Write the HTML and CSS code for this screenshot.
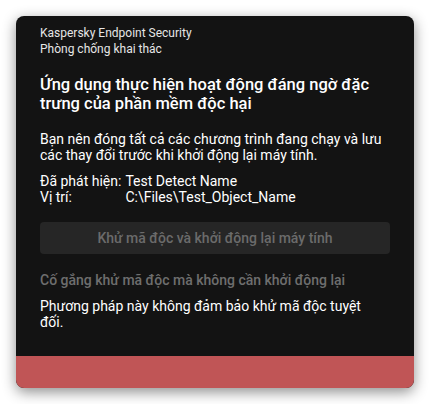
FILE: index.html
```html
<!DOCTYPE html>
<html lang="vi">

<head>
    <meta charset="UTF-8">
    <meta name="viewport" content="width=device-width, initial-scale=1.0">
    <title>Kaspersky Endpoint Security</title>
    <link rel="stylesheet" href="styles.css">
</head>

<body>
    <div class="dialog">
        <div class="content">
            <div class="app">
                <p>Kaspersky Endpoint Security</p>
                <p>Phòng chống khai thác</p>
            </div>

            <h2 class="title">Ứng dụng thực hiện hoạt động đáng ngờ đặc trưng của phần mềm độc hại</h2>

            <p class="message">Bạn nên đóng tất cả các chương trình đang chạy và lưu các thay đổi trước khi khởi động lại máy tính.</p>

            <div class="details">
                <span>Đã phát hiện:</span>
                <span>Test Detect Name</span>
                <span>Vị trí:</span>
                <span>C:\Files\Test_Object_Name</span>
            </div>

            <button type="button" class="action" disabled>Khử mã độc và khởi động lại máy tính</button>

            <a href="#" class="link">Cố gắng khử mã độc mà không cần khởi động lại</a>
            <p class="note">Phương pháp này không đảm bảo khử mã độc tuyệt đối.</p>
        </div>
        <div class="footer"></div>
    </div>
</body>

</html>
```

FILE: styles.css
```css
* {
    padding: 0;
    margin: 0;
    box-sizing: border-box;
    font-family: Roboto, "Noto Sans", sans-serif;
}

body {
    background-color: #ffffff;
    padding: 16px;
}

.dialog {
    display: flex;
    flex-direction: column;
    width: 398px;
    height: 372px;
    background-color: #131313;
    color: #ffffff;
    border-radius: 8px;
    overflow: hidden;
    box-shadow: 0 4px 14px rgba(0, 0, 0, 0.45);
}

.content {
    display: flex;
    flex-direction: column;
    padding: 9px 24px 0;
}

.app {
    font-size: 12px;
    line-height: 16px;
    color: #e6e6e6;
}

.title {
    margin-top: 18px;
    font-size: 16.5px;
    line-height: 19px;
    font-weight: 500;
}

.message,
.details,
.note {
    font-size: 14px;
    line-height: 16px;
}

.message {
    margin-top: 18px;
}

.details {
    display: grid;
    grid-template-columns: max-content 1fr;
    column-gap: 4px;
    margin-top: 10px;
}

.action {
    margin-top: 17px;
    height: 32px;
    border: none;
    border-radius: 4px;
    background-color: #262626;
    color: #6b6b6b;
    font-size: 14px;
    font-weight: 500;
}

.link {
    margin-top: 18px;
    font-size: 14px;
    line-height: 16px;
    font-weight: 500;
    color: #6e6e6e;
    text-decoration: none;
}

.note {
    margin-top: 10px;
    max-width: 340px;
}

.footer {
    margin-top: auto;
    height: 32px;
    background-color: #c05556;
}
```
